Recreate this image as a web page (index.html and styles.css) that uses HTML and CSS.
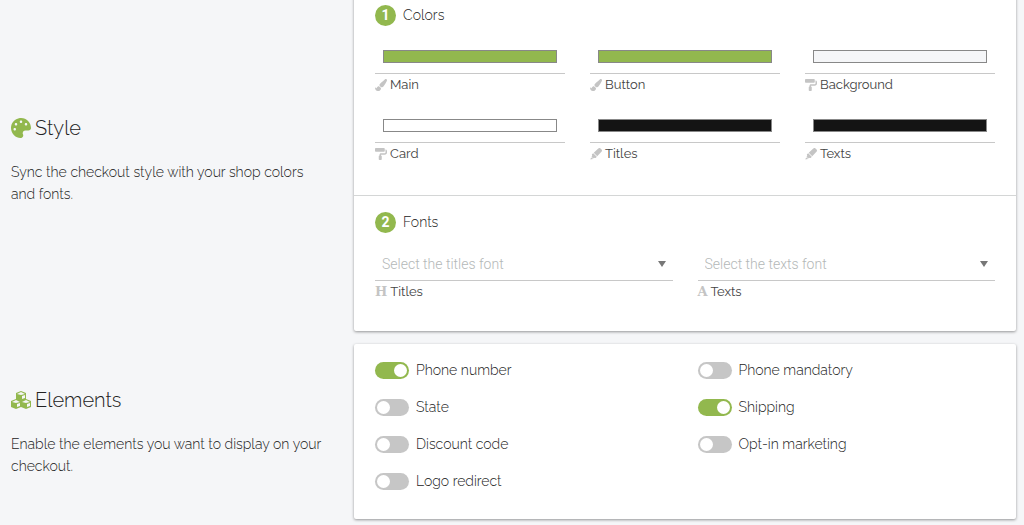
FILE: index.html
```
<!DOCTYPE html>
<html lang="en">
<head>
    <meta charset="UTF-8">
    <meta name="viewport" content="width=device-width, initial-scale=1.0">
    <title>Checkout settings</title>
    <link rel="stylesheet" href="styles.css">
</head>
<body>
    <!-- Shared icons -->
    <svg class="sprite" aria-hidden="true">
        <symbol id="brush" viewBox="0 0 512 512"><path d="M167.02 309.34c-40.12 2.58-76.53 17.86-97.19 72.3-2.35 6.21-8 9.98-14.59 9.98-11.11 0-45.46-27.67-55.25-34.35C0 439.62 37.93 512 128 512c75.86 0 128-43.77 128-120.19 0-3.11-.65-6.08-.97-9.13l-88.01-73.34zM457.89 0c-15.16 0-29.37 6.71-40.21 16.45C213.27 199.05 192 203.34 192 257.09c0 13.7 3.25 26.76 8.73 38.7l63.82 53.18c7.21 1.8 14.64 3.03 22.39 3.03 62.11 0 98.11-45.47 211.16-256.46 7.38-14.35 13.9-29.85 13.9-45.99C512 20.64 486 0 457.89 0z"/></symbol>
        <symbol id="roller" viewBox="0 0 512 512"><path d="M416 128V32c0-17.67-14.33-32-32-32H32C14.33 0 0 14.33 0 32v96c0 17.67 14.33 32 32 32h352c17.67 0 32-14.33 32-32zm32-64v128c0 17.67-14.33 32-32 32H256c-35.35 0-64 28.65-64 64v32c-17.67 0-32 14.33-32 32v128c0 17.67 14.33 32 32 32h64c17.67 0 32-14.33 32-32V352c0-17.67-14.33-32-32-32v-32h160c53.02 0 96-42.98 96-96v-64c0-35.35-28.65-64-64-64z"/></symbol>
        <symbol id="marker" viewBox="0 0 512 512"><path d="M0 480l70-78 50 50-24 28zM96 260c-16 16-18 34-10 52l10 30-32 34 72 72 34-32 30 10c18 8 36 6 52-10l38-42-152-152zM160 204L352 24c28-28 66-32 94-6l48 48c26 28 22 66-6 94L308 352z"/></symbol>
    </svg>

    <main class="settings">
        <section class="row">
            <div class="intro">
                <h2>
                    <svg class="intro-icon" viewBox="0 0 512 512" aria-hidden="true"><path d="M204.3 5C104.9 24.4 24.8 104.3 5.2 203.4c-37 187 131.7 326.4 258.8 306.7 41.2-6.4 61.4-54.6 42.5-91.7-23.1-45.4 9.9-98.4 60.9-98.4h79.7c35.8 0 64.8-29.6 64.9-65.3C511.5 97.1 368.1-26.9 204.3 5zM96 320c-17.7 0-32-14.3-32-32s14.3-32 32-32 32 14.3 32 32-14.3 32-32 32zm32-128c-17.7 0-32-14.3-32-32s14.3-32 32-32 32 14.3 32 32-14.3 32-32 32zm128-64c-17.7 0-32-14.3-32-32s14.3-32 32-32 32 14.3 32 32-14.3 32-32 32zm128 64c-17.7 0-32-14.3-32-32s14.3-32 32-32 32 14.3 32 32-14.3 32-32 32z"/></svg>
                    Style
                </h2>
                <p>Sync the checkout style with your shop colors and fonts.</p>
            </div>
            <div class="card">
                <div class="card-section colors-section">
                    <h3><span class="step">1</span>Colors</h3>
                    <div class="colors">
                        <div class="field">
                            <input type="color" id="color-main" value="#92b84e">
                            <label for="color-main"><svg class="icon" aria-hidden="true"><use href="#brush"/></svg>Main</label>
                        </div>
                        <div class="field">
                            <input type="color" id="color-button" value="#92b84e">
                            <label for="color-button"><svg class="icon" aria-hidden="true"><use href="#brush"/></svg>Button</label>
                        </div>
                        <div class="field">
                            <input type="color" id="color-background" value="#f5f6f8">
                            <label for="color-background"><svg class="icon" aria-hidden="true"><use href="#roller"/></svg>Background</label>
                        </div>
                        <div class="field">
                            <input type="color" id="color-card" value="#ffffff">
                            <label for="color-card"><svg class="icon" aria-hidden="true"><use href="#roller"/></svg>Card</label>
                        </div>
                        <div class="field">
                            <input type="color" id="color-titles" value="#141414">
                            <label for="color-titles"><svg class="icon" aria-hidden="true"><use href="#marker"/></svg>Titles</label>
                        </div>
                        <div class="field">
                            <input type="color" id="color-texts" value="#141414">
                            <label for="color-texts"><svg class="icon" aria-hidden="true"><use href="#marker"/></svg>Texts</label>
                        </div>
                    </div>
                </div>
                <div class="card-section fonts-section">
                    <h3><span class="step">2</span>Fonts</h3>
                    <div class="fonts">
                        <div class="field">
                            <div class="select">
                                <select id="font-titles"><option>Select the titles font</option></select>
                            </div>
                            <label for="font-titles"><span class="letter" aria-hidden="true">H</span>Titles</label>
                        </div>
                        <div class="field">
                            <div class="select">
                                <select id="font-texts"><option>Select the texts font</option></select>
                            </div>
                            <label for="font-texts"><span class="letter" aria-hidden="true">A</span>Texts</label>
                        </div>
                    </div>
                </div>
            </div>
        </section>

        <section class="row">
            <div class="intro">
                <h2>
                    <svg class="intro-icon" viewBox="0 0 20 20" aria-hidden="true">
                        <path d="M10 1l5 2v6l-5 2-5-2V3zM5 9l5 2v6l-5 2-5-2v-6zM15 9l5 2v6l-5 2-5-2v-6z"/>
                        <path class="cube-face" d="M10 2l4 2-4 1-4-1zM5 10l4 2-4 1-4-1zM15 10l4 2-4 1-4-1zM11 6l3-1v3l-3 1zM6 14l3-1v3l-3 1zM16 14l3-1v3l-3 1z"/>
                    </svg>
                    Elements
                </h2>
                <p>Enable the elements you want to display on your checkout.</p>
            </div>
            <div class="card toggles">
                <label class="toggle"><input type="checkbox" checked>Phone number</label>
                <label class="toggle"><input type="checkbox">Phone mandatory</label>
                <label class="toggle"><input type="checkbox">State</label>
                <label class="toggle"><input type="checkbox" checked>Shipping</label>
                <label class="toggle"><input type="checkbox">Discount code</label>
                <label class="toggle"><input type="checkbox">Opt-in marketing</label>
                <label class="toggle"><input type="checkbox">Logo redirect</label>
            </div>
        </section>
    </main>
</body>
</html>
```
FILE: styles.css
```
* {
    box-sizing: border-box;
}
body {
    margin: 0;
    background: #f5f6f8;
    color: #222;
    font-family: Raleway, Lato, sans-serif;
    font-size: 14px;
    font-weight: 300;
    line-height: 22px;
}
.sprite {
    display: none;
}
.settings {
    display: grid;
    gap: 13px;
    margin-top: -11px;
    padding: 0 8px 5px 11px;
}
.row {
    display: grid;
    grid-template-columns: 343fr 662fr;
    align-items: center;
}
.intro {
    padding: 2px 28px 0 0;
}
.intro h2 {
    display: flex;
    align-items: center;
    gap: 4px;
    margin: 0 0 22px;
    font-size: 20px;
    font-weight: 300;
    line-height: 22px;
}
.intro p {
    margin: 0;
}
.intro-icon {
    width: 20px;
    height: 20px;
    fill: #92b84e;
}
.cube-face {
    fill: #f5f6f8;
}
.card {
    background: #fff;
    border-radius: 2px;
    box-shadow: 0 1px 3px rgba(0,0,0,0.4);
}
.card-section {
    padding: 16px 21px 28px;
}
.colors-section {
    padding-bottom: 30px;
}
.fonts-section {
    border-top: 1px solid #d4d6d6;
}
.card h3 {
    display: flex;
    align-items: center;
    gap: 7px;
    margin: 0 0 14px;
    font-size: 14px;
    font-weight: 300;
    line-height: 21px;
}
.step {
    width: 21px;
    height: 21px;
    border-radius: 50%;
    background: #92b84e;
    color: #fff;
    font-family: Roboto, sans-serif;
    font-weight: 700;
    text-align: center;
}
.colors {
    display: grid;
    grid-template-columns: repeat(3, 1fr);
    gap: 13px 25px;
}
.fonts {
    display: grid;
    grid-template-columns: repeat(2, 1fr);
    gap: 25px;
}
.field label {
    display: flex;
    align-items: center;
    gap: 3px;
    font-size: 13px;
    font-weight: 400;
    color: #444;
}
.field input {
    appearance: none;
    display: block;
    width: 100%;
    height: 34px;
    padding: 10px 8px;
    border: 0;
    border-bottom: 1px solid #c8c8c8;
    background: none;
}
.field input::-webkit-color-swatch-wrapper {
    padding: 0;
}
.field input::-webkit-color-swatch {
    border: 1px solid #888;
    border-radius: 0;
}
.icon {
    width: 12px;
    height: 12px;
    fill: #c4c4c4;
}
.letter {
    font-family: "DejaVu Serif", serif;
    font-weight: 700;
    color: #c4c4c4;
}
.select {
    display: flex;
    align-items: center;
    border-bottom: 1px solid #c8c8c8;
    padding-right: 7px;
}
.select::after {
    content: "";
    border: 4px solid transparent;
    border-top: 6px solid #777;
    border-bottom: 0;
}
.select select {
    appearance: none;
    flex: 1;
    height: 33px;
    padding: 0 7px;
    border: 0;
    background: none;
    color: #b4b8b8;
    font-family: Roboto, sans-serif;
    font-size: 14px;
    font-weight: 300;
}
.toggles {
    display: grid;
    grid-template-columns: repeat(2, 1fr);
    gap: 15px 25px;
    padding: 15px 21px 27px;
}
.toggle {
    display: flex;
    align-items: center;
    gap: 7px;
}
.toggle input {
    appearance: none;
    display: flex;
    width: 34px;
    height: 17px;
    margin: 0;
    padding: 2px;
    border-radius: 9px;
    background: #c6c6c6;
}
.toggle input::before {
    content: "";
    width: 13px;
    height: 13px;
    border-radius: 50%;
    background: #fff;
}
.toggle input:checked {
    justify-content: flex-end;
    background: #92b84e;
}
```
